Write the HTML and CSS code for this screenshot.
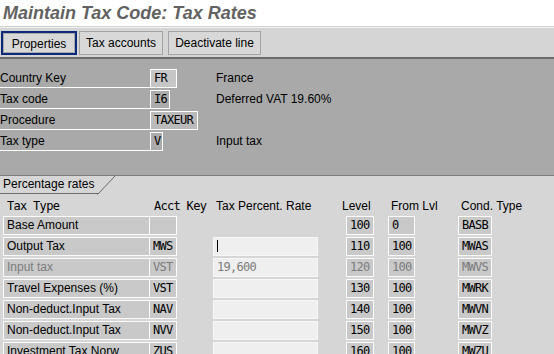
FILE: index.html
```html
<!DOCTYPE html>
<html>
<head>
<meta charset="utf-8">
<link rel="stylesheet" href="styles.css">
</head>
<body>
<div class="title">Maintain Tax Code: Tax Rates</div>
<div class="toolbar">
  <button class="btn focus">Properties</button>
  <button class="btn">Tax accounts</button>
  <button class="btn">Deactivate line</button>
</div>
<div class="header">
  <div class="hrow"><span class="hlabel">Country Key</span><span class="hfield light w27">FR</span><span class="hdesc">France</span></div>
  <div class="hrow"><span class="hlabel">Tax code</span><span class="hfield w20">I6</span><span class="hdesc">Deferred VAT 19.60%</span></div>
  <div class="hrow"><span class="hlabel">Procedure</span><span class="hfield mid w48">TAXEUR</span><span class="hdesc"></span></div>
  <div class="hrow"><span class="hlabel">Tax type</span><span class="hfield w13">V</span><span class="hdesc">Input tax</span></div>
</div>
<div class="tabbar">
  <div class="tab">Percentage rates</div>
  <svg class="tabslash" width="20" height="19" viewBox="0 0 20 19"><line x1="0.5" y1="18.5" x2="18" y2="0" stroke="#6a6a6a" stroke-width="1"/></svg>
</div>
<div class="table">
  <div class="thead">
    <span class="th mono w-type">Tax Type</span>
    <span class="th mono w-acct">Acct Key</span>
    <span class="th w-rate">Tax Percent. Rate</span>
    <span class="th w-level">Level</span>
    <span class="th w-from">From Lvl</span>
    <span class="th">Cond. Type</span>
  </div>
  <div class="trow">
    <span class="cell c-label">Base Amount</span><span class="cell mono c-acct"></span>
    <span class="c-rate none"></span>
    <span class="cell mono c-level">100</span><span class="cell mono c-from">0</span><span class="cell mono c-cond">BASB</span>
  </div>
  <div class="trow">
    <span class="cell c-label">Output Tax</span><span class="cell mono c-acct">MWS</span>
    <span class="cell input c-rate"><span class="cursor"></span></span>
    <span class="cell mono c-level">110</span><span class="cell mono c-from">100</span><span class="cell mono c-cond">MWAS</span>
  </div>
  <div class="trow dis">
    <span class="cell c-label">Input tax</span><span class="cell mono c-acct">VST</span>
    <span class="cell input mono c-rate">19,600</span>
    <span class="cell mono c-level">120</span><span class="cell mono c-from">100</span><span class="cell mono c-cond">MWVS</span>
  </div>
  <div class="trow">
    <span class="cell c-label">Travel Expenses (%)</span><span class="cell mono c-acct">VST</span>
    <span class="cell input c-rate"></span>
    <span class="cell mono c-level">130</span><span class="cell mono c-from">100</span><span class="cell mono c-cond">MWRK</span>
  </div>
  <div class="trow">
    <span class="cell c-label">Non-deduct.Input Tax</span><span class="cell mono c-acct">NAV</span>
    <span class="cell input c-rate"></span>
    <span class="cell mono c-level">140</span><span class="cell mono c-from">100</span><span class="cell mono c-cond">MWVN</span>
  </div>
  <div class="trow">
    <span class="cell c-label">Non-deduct.Input Tax</span><span class="cell mono c-acct">NVV</span>
    <span class="cell input c-rate"></span>
    <span class="cell mono c-level">150</span><span class="cell mono c-from">100</span><span class="cell mono c-cond">MWVZ</span>
  </div>
  <div class="trow">
    <span class="cell c-label">Investment Tax Norw</span><span class="cell mono c-acct">ZUS</span>
    <span class="cell input c-rate"></span>
    <span class="cell mono c-level">160</span><span class="cell mono c-from">100</span><span class="cell mono c-cond">MWZU</span>
  </div>
</div>
</body>
</html>
```
FILE: styles.css
```css
* { box-sizing: border-box; }
html, body { margin: 0; padding: 0; }
body {
  width: 554px;
  height: 354px;
  overflow: hidden;
  font-family: "Liberation Sans", Arial, sans-serif;
  font-size: 12px;
  color: #000;
  background: #d6d6d6;
}
.mono {
  font-family: "DejaVu Sans Mono", "Liberation Mono", monospace;
  font-size: 12px;
  letter-spacing: -0.7px;
}

.title {
  height: 27px;
  padding: 2px 0 0 3px;
  background: #fff;
  border-bottom: 1px solid #d2d2d2;
  font-size: 18px;
  font-weight: bold;
  font-style: italic;
  color: #626262;
  line-height: 22px;
}
.toolbar {
  height: 32px;
  display: flex;
  align-items: flex-start;
  padding: 3px 0 0 1px;
  background: #d5d5d5;
  border-top: 1px solid #f2f2f2;
  border-bottom: 2px solid #6c6c6c;
}
.btn {
  font-family: "Liberation Sans", Arial, sans-serif;
  font-size: 12px;
  color: #000;
  height: 24px;
  margin: 0;
  padding: 0;
  white-space: nowrap;
  text-align: center;
  background: #d8d8d8;
  border: 1px solid #a4a4a4;
  border-radius: 0;
  line-height: 22px;
}
.btn.focus {
  width: 76px;
  border: 2px solid #0b2a7c;
  box-shadow: inset 0 0 0 1px #a8a8a8;
  margin-right: 2px;
}
.btn:nth-child(2) { width: 84px; margin-right: 5px; }
.btn:nth-child(3) { width: 93px; }

.header {
  height: 117px;
  background: #a9a9a9;
  border-bottom: 1px solid #7c7c7c;
  padding-top: 10px;
  display: flex;
  flex-direction: column;
  gap: 2px;
}
.hrow { display: flex; height: 19px; align-items: stretch; }
.hlabel {
  width: 150px;
  border-bottom: 1px solid #fff;
  line-height: 19px;
}
.hfield {
  border: 1px solid #fff;
  padding-left: 3px;
  line-height: 17px;
  font-family: "DejaVu Sans Mono", "Liberation Mono", monospace;
  font-size: 12px;
  letter-spacing: -0.7px;
  background: #ababab;
  white-space: nowrap;
}
.hfield.light { background: #c6c6c6; }
.hfield.mid { background: #bababa; }
.w27 { width: 27px; }
.w20 { width: 20px; }
.w48 { width: 48px; }
.w13 { width: 13px; }
.hdesc { margin-left: 39px; line-height: 19px; }
.hrow:nth-child(2) .hdesc { margin-left: 46px; }
.hrow:nth-child(4) .hdesc { margin-left: 53px; }

.tabbar {
  height: 18px;
  display: flex;
}
.tab {
  width: 98px;
  padding-left: 3px;
  line-height: 17px;
  border-bottom: 1px solid #6a6a6a;
}
.tabslash { display: block; margin-left: -1px; }

.thead {
  display: flex;
  height: 22px;
  align-items: center;
  padding-left: 7px;
  padding-top: 1px;
}
.w-type { width: 147px; }
.w-acct { width: 62px; }
.w-rate { width: 126px; }
.w-level { width: 49px; }
.w-from { width: 70px; }

.trow {
  display: flex;
  height: 19px;
  margin-bottom: 2px;
  padding-left: 3px;
}
.cell {
  height: 19px;
  border: 1px solid #fbfbfb;
  background: #c9c9c9;
  line-height: 17px;
  padding-left: 3px;
  white-space: nowrap;
  overflow: hidden;
}
.c-label { width: 147px; }
.c-acct { width: 27px; border-left: none; }
.c-rate { width: 105px; margin-left: 36px; }
.c-rate.none { display: block; }
.c-level { width: 28px; margin-left: 28px; }
.c-from { width: 27px; margin-left: 14px; }
.c-cond { width: 34px; margin-left: 43px; }
.cell.input {
  background: #efefef;
  border-color: #f7f7f7;
}
.cursor {
  display: inline-block;
  width: 1px;
  height: 12px;
  background: #000;
  vertical-align: middle;
  margin-top: -2px;
}
.trow.dis .cell { color: #7c7c7c; }
```
